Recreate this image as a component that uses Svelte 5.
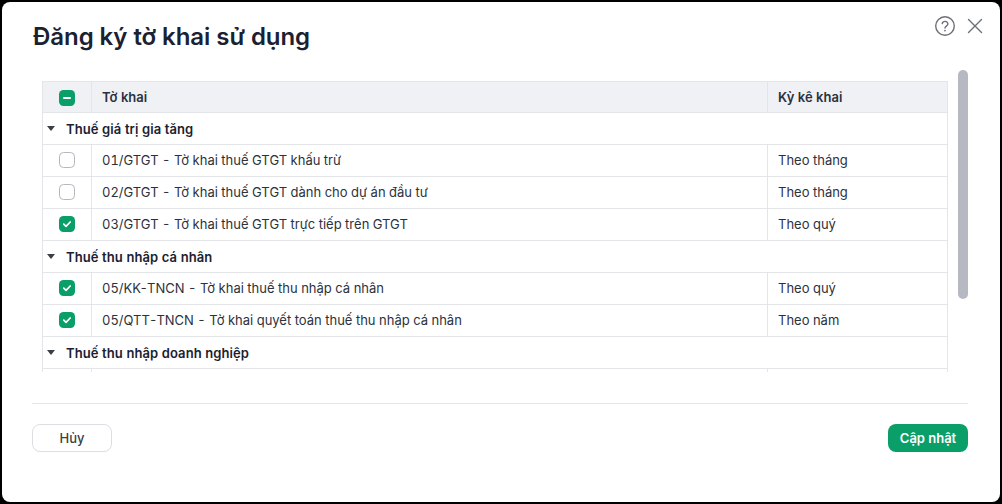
<script>
  const groups = [
    { name: 'Thuế giá trị gia tăng', items: [
      { code: '01/GTGT', name: 'Tờ khai thuế GTGT khấu trừ', period: 'Theo tháng', checked: false },
      { code: '02/GTGT', name: 'Tờ khai thuế GTGT dành cho dự án đầu tư', period: 'Theo tháng', checked: false },
      { code: '03/GTGT', name: 'Tờ khai thuế GTGT trực tiếp trên GTGT', period: 'Theo quý', checked: true }
    ]},
    { name: 'Thuế thu nhập cá nhân', items: [
      { code: '05/KK-TNCN', name: 'Tờ khai thuế thu nhập cá nhân', period: 'Theo quý', checked: true },
      { code: '05/QTT-TNCN', name: 'Tờ khai quyết toán thuế thu nhập cá nhân', period: 'Theo năm', checked: true }
    ]},
    { name: 'Thuế thu nhập doanh nghiệp', items: [] }
  ];
</script>

<div class="modal">
  <header class="head">
    <h1>Đăng ký tờ khai sử dụng</h1>
    <div class="tools">
      <svg width="22" height="22" viewBox="0 0 22 22" fill="none" stroke="#6b7078" stroke-width="1.4">
        <circle cx="11" cy="11" r="9.3"/>
        <path d="M8.2 8.6a2.9 2.9 0 0 1 5.7.4c0 1.9-2.9 2.3-2.9 4" stroke-linecap="round"/>
        <circle cx="11" cy="15.6" r="0.9" fill="#6b7078" stroke="none"/>
      </svg>
      <svg width="16" height="16" viewBox="0 0 16 16" fill="none" stroke="#6b7078" stroke-width="1.4" stroke-linecap="round">
        <path d="M1.5 1.5l13 13M14.500 1.500l-13 13"/>
      </svg>
    </div>
  </header>

  <div class="body">
    <div class="viewport">
      <table>
        <colgroup><col class="c1"/><col class="c2"/><col class="c3"/></colgroup>
        <thead>
          <tr>
            <th class="center">
              <span class="box on head-box">
                <svg width="16" height="16" viewBox="0 0 16 16"><path d="M5 8h6" stroke="#fff" stroke-width="2" stroke-linecap="round"/></svg>
              </span>
            </th>
            <th>Tờ khai</th>
            <th>Kỳ kê khai</th>
          </tr>
        </thead>
        <tbody>
          {#each groups as g}
            <tr class="group">
              <td colspan="3">
                <div class="gname">
                  <svg class="caret" width="8" height="5" viewBox="0 0 8 5"><path d="M0 0h8L4 5z" fill="#3a3f47"/></svg>
                  {g.name}
                </div>
              </td>
            </tr>
            {#each g.items as it}
              <tr>
                <td class="center">
                  {#if it.checked}
                    <span class="box on">
                      <svg width="16" height="16" viewBox="0 0 16 16" fill="none"><path d="M4.800 8.200l2.200 2.100 4.200-4.300" stroke="#fff" stroke-width="1.700" stroke-linecap="round" stroke-linejoin="round"/></svg>
                    </span>
                  {:else}
                    <span class="box"></span>
                  {/if}
                </td>
                <td><span class="lift">{it.code} - {it.name}</span></td>
                <td><span class="lift">{it.period}</span></td>
              </tr>
            {/each}
          {/each}
          <tr><td></td><td></td><td></td></tr>
        </tbody>
      </table>
    </div>
    <div class="scrollbar"><div class="thumb"></div></div>
  </div>

  <footer class="foot">
    <button class="btn ghost">Hủy</button>
    <button class="btn primary">Cập nhật</button>
  </footer>
</div>

<style>
  :global(body) { margin: 0; background: #000; }
  .modal {
    box-sizing: border-box;
    width: 998px;
    height: 500px;
    margin: 2px;
    background: #fff;
    border-radius: 8px;
    display: flex;
    flex-direction: column;
    padding: 0 32px 0 30px;
    font-family: Inter, "Noto Sans", sans-serif;
    color: #1a2130;
    overflow: hidden;
  }
  .head {
    display: flex;
    justify-content: space-between;
    align-items: flex-start;
    height: 68px;
    flex: none;
  }
  h1 {
    margin: 19px 0 0 1px;
    font-size: 24px;
    line-height: 32px;
    font-weight: 600;
    letter-spacing: -0.05px;
    color: #1a2130;
  }
  .tools {
    display: flex;
    align-items: center;
    gap: 11px;
    margin: 13px -15px 0 0;
  }
  .body {
    display: flex;
    height: 302px;
    flex: none;
  }
  .viewport {
    flex: 1;
    min-width: 0;
    padding: 11px 10px 0;
    overflow: hidden;
  }
  table {
    width: 906px;
    table-layout: fixed;
    border-collapse: collapse;
    font-size: 13px;
    font-variant-numeric: tabular-nums;
    color: #2c323c;
  }
  .c1 { width: 49px; }
  .c3 { width: 180px; }
  th, td {
    height: 32px;
    box-sizing: border-box;
    padding: 0 10px;
    border: 1px solid #e3e5e8;
    text-align: left;
    white-space: nowrap;
  }
  th {
    height: 31px;
    background: #f0f1f4;
    font-weight: 600;
    font-size: 13px;
    color: #2a3140;
  }
  .center { padding: 0; text-align: center; }
  .lift { display: block; margin-top: -1px; }
  .box {
    box-sizing: border-box;
    display: inline-flex;
    vertical-align: middle;
    width: 16px;
    height: 16px;
    margin-bottom: 2px;
    border-radius: 4.500px;
    border: 1px solid #b4b7bd;
    background: #fff;
  }
  .box.on { border: 0; background: #0a9e68; }
  .box.head-box { margin-bottom: 0; }
  .gname {
    display: flex;
    align-items: center;
    font-weight: 600;
    font-size: 13px;
    letter-spacing: 0.08px;
    color: #1a2130;
  }
  .group td { padding: 0 0 0 4px; }
  .caret { margin-right: 11px; flex: none; }
  .scrollbar {
    width: 10px;
    flex: none;
  }
  .thumb {
    width: 10px;
    height: 229px;
    background: #b6b9c2;
    border-radius: 5px;
  }
  .foot {
    flex: none;
    margin-top: 31px;
    border-top: 1px solid #e3e5e8;
    padding-top: 20px;
    display: flex;
    justify-content: space-between;
  }
  .btn {
    box-sizing: border-box;
    width: 80px;
    height: 28px;
    border-radius: 8px;
    font-family: inherit;
    font-size: 13px;
    font-weight: 500;
    padding: 0;
  }
  .ghost { background: #fff; border: 1px solid #dcdee2; color: #3a3f4a; }
  .primary { background: #0a9e68; border: 0; color: #fff; font-weight: 600; }
</style>
